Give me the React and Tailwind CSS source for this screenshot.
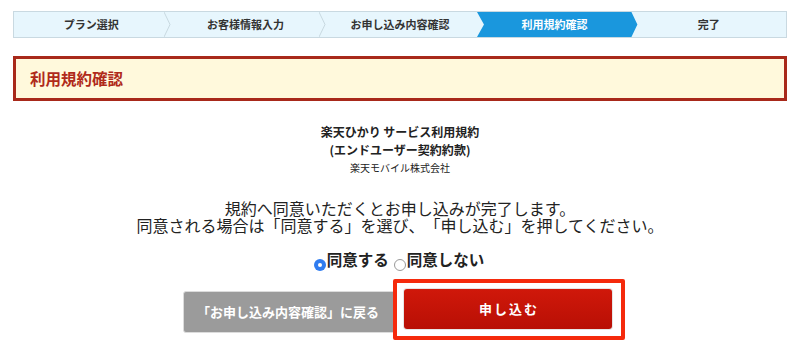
import React, {useState} from 'react';

const steps = ['プラン選択', 'お客様情報入力', 'お申し込み内容確認', '利用規約確認', '完了'];
const activeStep = 3;

function Step({label, index}) {
    const active = index === activeStep;
    const last = index === steps.length - 1;
    return (
        <div className="relative flex-1 h-full flex items-center justify-center">
            {active &&
                <svg className="absolute inset-0 w-[calc(100%+6px)] h-full" viewBox="0 0 161 27" preserveAspectRatio="none">
                    <polygon points="0,0 155,0 161,13.5 155,27 0,27 7,13.5" fill="#1a97dd"/>
                </svg>}
            {!active && !last && index !== activeStep - 1 &&
                <svg className="absolute right-[-3px] top-0 h-full w-[7px]" viewBox="0 0 7 27" preserveAspectRatio="none">
                    <polyline points="0,0 6,13.5 0,27" fill="none" stroke="#c7d7df" strokeWidth="1"/>
                </svg>}
            <span className={`relative text-[11px] font-bold ${active ? 'text-white' : 'text-[#333]'}`}>{label}</span>
        </div>
    );
}

function Radio({checked, label, onSelect}) {
    return (
        <label className="flex items-end cursor-pointer" onClick={onSelect}>
            <span className={`w-[12px] h-[12px] rounded-full mb-[-3px] flex items-center justify-center ${checked ? 'bg-[#2f7cf0]' : 'border border-[#999] bg-white'}`}>
                {checked && <span className="w-[4px] h-[4px] rounded-full bg-white"/>}
            </span>
            <span className="ml-[1px]">{label}</span>
        </label>
    );
}

export default function App() {
    const [agree, setAgree] = useState(true);

    return (
        <div className="w-[800px] h-[349px] bg-white overflow-hidden font-['Noto_Sans_CJK_JP','Noto_Sans',sans-serif] text-[#222] [text-spacing-trim:space-all]">
            <div className="mx-[13px] mt-[11px] h-[27px] flex bg-[#e7f6fd] border border-[#c9d9e1]">
                {steps.map((s, i) => <Step key={s} label={s} index={i}/>)}
            </div>

            <div className="mx-[13px] mt-[18px] h-[45px] border-[3px] border-[#a8291a] bg-[#fff9dc] flex items-center px-[14px]">
                <h2 className="text-[15.5px] font-bold text-[#b02a1a] leading-none">利用規約確認</h2>
            </div>

            <div className="mt-[22px] flex flex-col items-center">
                <p className="text-[12px] font-bold leading-[18px]">楽天ひかり サービス利用規約</p>
                <p className="text-[12px] font-bold leading-[18px]">(エンドユーザー契約約款)</p>
                <p className="text-[10px] leading-[18px]">楽天モバイル株式会社</p>
            </div>

            <div className="mt-[23px] text-center text-[16px] leading-[17px]">
                <p>規約へ同意いただくとお申し込みが完了します。</p>
                <p>同意される場合は「同意する」を選び、「申し込む」を押してください。</p>
            </div>

            <div className="mt-[18px] flex justify-center items-end gap-[5px] text-[15.5px] font-bold leading-none pr-[2px]">
                <Radio checked={agree} label="同意する" onSelect={() => setAgree(true)}/>
                <Radio checked={!agree} label="同意しない" onSelect={() => setAgree(false)}/>
            </div>

            <div className="mt-[11px] flex justify-center items-start pl-[8px]">
                <button className="w-[215px] h-[42px] mt-[12px] mr-[-5px] bg-[#9b9b9b] border border-[#dcdcdc] rounded-[3px] text-white text-[13px] font-bold pr-[5px] text-center">
                    「お申し込み内容確認」に戻る
                </button>
                <div className="relative w-[232px] h-[61px] border-[4px] border-[#f52a0c] bg-white rounded-[2px] pl-[7px] pr-[9px] pt-[6px]">
                    <button className="w-full h-[40px] rounded-[3px] bg-gradient-to-b from-[#d0180a] to-[#b80f05] text-white text-[13px] font-bold tracking-[2px] pl-[2px] shadow-[0_0_0_1px_#e6e6e6]">
                        申し込む
                    </button>
                </div>
            </div>
        </div>
    );
}
